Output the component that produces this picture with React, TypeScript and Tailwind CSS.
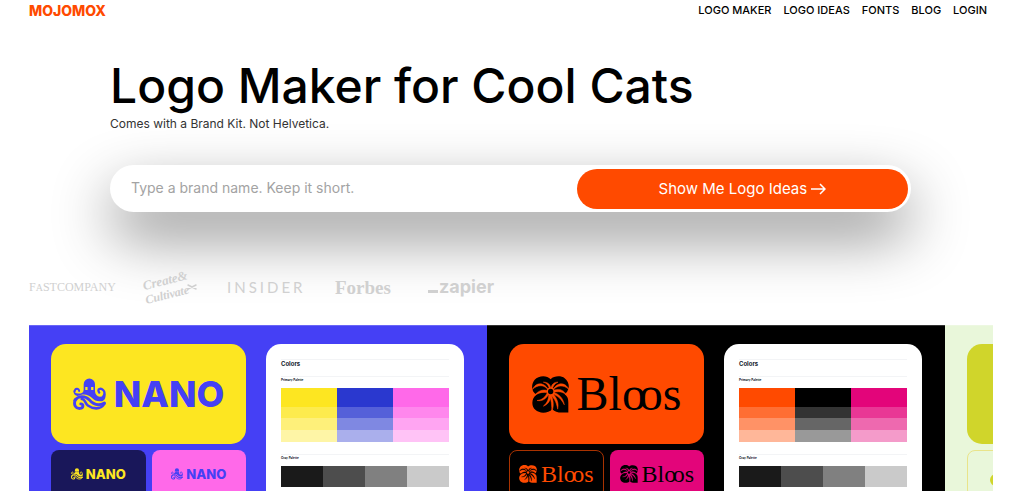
import React from "react";

const navLinks = ["LOGO MAKER", "LOGO IDEAS", "FONTS", "BLOG", "LOGIN"];

function Octopus({ className }: { className: string }) {
  return (
    <svg viewBox="0 0 102 100" className={className} fill="none" stroke="currentColor" strokeLinecap="round" aria-hidden="true">
      <path
        d="M33 18a17.500 17.500 0 0 1 35 0v22c1 10 6 16 15 17 10 0 17-5 18-12 1 16-4 26-15 26-12 1-20-3-28-11C48 50 32 46 14 55 5 53 0 45 2 36c2 8 8 12 16 11 9 0 15-4 15-12zM38 27v9h7v-9zM56 27v9h7v-9z"
        fill="currentColor"
        fillRule="evenodd"
        stroke="none"
      />
      <path d="M19 39C18 29 6 30 5 41" strokeWidth="6" />
      <path d="M81 44C73 33 86 29 93 36C98 41 98 50 93 57" strokeWidth="7" />
      <path d="M6 68C16 53 38 53 50 66C60 78 76 88 97 76" strokeWidth="9" />
      <path d="M7 66C1 82 8 94 22 93C33 92 33 79 24 79" strokeWidth="9" />
      <path d="M27 64C39 64 36 78 46 84C60 94 84 99 97 79" strokeWidth="8" />
    </svg>
  );
}

function Flower({ className, cut }: { className: string; cut: string }) {
  return (
    <svg viewBox="0 0 111 110" className={className} aria-hidden="true">
      <path
        fill="currentColor"
        d="M56 9C66-2 88-2 98 6c12 9 16 26 9 37-2 5-5 8-9 11 12 8 11 20 11 32v23H90c-14 0-22-3-29-10-12 13-39 14-51 2-13-12-12-34 4-46C-2 48-4 26 8 11 19-2 44-4 56 9z"
      />
      <g fill={cut} stroke={cut} strokeWidth="1.500">
        <path d="M50 43C38 25 18 24 1 40 14 14 40 20 50 43z" />
        <path d="M53 42C51 28 45 21 34 18 48 17 57 26 57 42z" />
        <path d="M56 42C57 26 65 17 78 18 68 22 62 29 61 42z" />
        <path d="M62 43C72 20 98 14 111 40 94 24 74 27 62 43z" />
        <path d="M62 44C79 35 96 41 103 56 91 46 79 45 62 49z" />
        <path d="M62 48C83 53 94 68 97 86 88 69 78 59 60 53z" />
        <path d="M60 50C76 66 81 82 77 99 74 81 69 69 55 55z" />
        <path d="M55 50C66 73 66 91 59 108 60 88 58 72 52 54z" />
        <path d="M57 51C57 73 48 85 34 90 46 80 51 69 50 50z" />
        <path d="M52 49C44 69 31 76 15 73 31 71 39 64 46 49z" />
        <path d="M50 44C34 38 18 43 8 58 21 49 33 47 50 50z" />
      </g>
      <circle cx="56" cy="46" r="12" fill={cut} />
      <circle cx="56" cy="46" r="8" fill="currentColor" />
    </svg>
  );
}

function NanoLogo({ small = false }: { small?: boolean }) {
  return (
    <div className={small ? "flex items-center gap-[3px]" : "flex items-center gap-2"}>
      <Octopus className={small ? "size-3" : "size-[33px]"} />
      <span className={small ? "text-[13px] leading-none font-extrabold" : "text-[36px] leading-none font-extrabold"}>NANO</span>
    </div>
  );
}

function BloosLogo({ small = false, cut }: { small?: boolean; cut: string }) {
  return (
    <div className={small ? "flex items-center gap-1" : "flex items-center gap-2"}>
      <Flower className={small ? "size-[18px]" : "size-[37px]"} cut={cut} />
      <span
        className={
          small
            ? "font-['Liberation_Serif',serif] text-[24px] leading-none"
            : "font-['Liberation_Serif',serif] text-[48px] leading-none"
        }
      >
        Blo<span className="-ml-[0.15em]">o</span>s
      </span>
    </div>
  );
}

function Palette({ colors }: { colors: string[] }) {
  return (
    <div className="rounded-t-[15px] bg-white px-[15px] pt-[15px]">
      <h3 className="h-[17px] border-t border-gray-100 text-[6px] leading-[8px] font-bold text-gray-900">Colors</h3>
      <h4 className="h-3 border-t border-gray-100 pt-px text-[3px] leading-[4px] font-bold text-gray-900">Primary Palette</h4>
      <div className="grid grid-cols-3">
        {colors.map((color) => (
          <div key={color}>
            <div className="h-[19px]" style={{ backgroundColor: color }} />
            <div className="h-[11px] opacity-80" style={{ backgroundColor: color }} />
            <div className="h-3 opacity-60" style={{ backgroundColor: color }} />
            <div className="h-3 opacity-40" style={{ backgroundColor: color }} />
          </div>
        ))}
      </div>
      <h4 className="mt-3 h-3 border-t border-gray-100 pt-px text-[3px] leading-[4px] font-bold text-gray-900">Gray Palette</h4>
      <div className="grid h-[21px] grid-cols-4">
        <div className="bg-[#1a1a1a]" />
        <div className="bg-[#4d4d4d]" />
        <div className="bg-[#808080]" />
        <div className="bg-[#cacaca]" />
      </div>
    </div>
  );
}

type TileProps = {
  tone: string;
  main?: React.ReactNode;
  mainTone: string;
  left: React.ReactNode;
  leftTone: string;
  right?: React.ReactNode;
  rightTone: string;
  colors?: string[];
};

function BrandTile({ tone, main, mainTone, left, leftTone, right, rightTone, colors }: TileProps) {
  return (
    <li className={`grid w-[458px] shrink-0 grid-cols-[195px_198px] gap-5 border-t border-white/20 pt-[18px] pl-[22px] ${tone}`}>
      <div className="flex flex-col gap-1.5">
        <div className={`flex h-[100px] items-center justify-center rounded-[15px] ${mainTone}`}>{main}</div>
        <div className="grid grid-cols-2 gap-1.5">
          <div className={`flex h-[48px] items-center justify-center rounded-lg ${leftTone}`}>{left}</div>
          <div className={`flex h-[48px] items-center justify-center rounded-lg ${rightTone}`}>{right}</div>
        </div>
      </div>
      {colors && <Palette colors={colors} />}
    </li>
  );
}

function PressLogos() {
  return (
    <div className="flex h-9 items-center text-[#d0d0d0]">
      <span className="w-[112px] font-['Liberation_Serif',serif] text-[12px] leading-none whitespace-nowrap">
        F<span className="text-[10px]">A</span>STCOMPANY
      </span>
      <div className="w-[86px]">
        <svg viewBox="0 0 56 36" className="h-9 w-14" fill="currentColor" role="img" aria-label="Create & Cultivate">
          <g transform="rotate(-14 28 18)" fontFamily="Liberation Serif, serif" fontStyle="italic" fontWeight="700">
            <text x="3" y="15" fontSize="13">Create&amp;</text>
            <text x="2" y="29" fontSize="12">Cultivate</text>
          </g>
          <path d="M47 20l8-4M47 16l8 4" stroke="currentColor" strokeWidth="1.500" strokeLinecap="round" />
        </svg>
      </div>
      <span className="w-[108px] font-[Lato,sans-serif] text-[15px] leading-none tracking-[0.2em]">INSIDER</span>
      <span className="w-[93px] font-['Liberation_Serif',serif] text-[19px] leading-none font-bold">Forbes</span>
      <span className="flex items-end gap-px text-[18px] leading-5 font-bold">
        <span className="mb-1 h-[3px] w-2.5 bg-current" />
        zapier
      </span>
    </div>
  );
}

export default function App() {
  return (
    <div className="flex h-screen flex-col overflow-hidden bg-white font-[Inter,sans-serif] text-black">
      <header className="flex h-[21px] shrink-0 items-center justify-between pr-[37px] pl-[29px]">
        <a href="#" className="text-[14px] leading-none font-extrabold text-[#ff4a00]">MOJOMOX</a>
        <nav className="flex gap-3 text-[11px] leading-none font-medium">
          {navLinks.map((label) => (
            <a key={label} href="#">{label}</a>
          ))}
        </nav>
      </header>

      <main className="flex min-h-0 grow flex-col">
        <section className="pt-[37px] pr-[113px] pl-[110px]">
          <h1 className="text-[48px] leading-[56px] font-medium">Logo Maker for Cool Cats</h1>
          <p className="mt-0.5 text-[12px] leading-4 text-[#333]">Comes with a Brand Kit. Not Helvetica.</p>
          <form
            className="mt-[33px] flex h-[47px] rounded-full bg-white p-[3px] pt-1 shadow-[0_25px_60px_rgba(0,0,0,0.45)]"
            onSubmit={(event) => event.preventDefault()}
          >
            <input
              type="text"
              aria-label="Brand name"
              placeholder="Type a brand name. Keep it short."
              className="min-w-0 flex-1 bg-transparent pb-1 pl-[18px] text-[14px] outline-none placeholder:text-[#a3a3a3]"
            />
            <button type="submit" className="flex w-5/12 items-center justify-center gap-1 rounded-full bg-[#ff4a00] text-[15px] text-white">
              Show Me Logo Ideas
              <svg viewBox="0 0 15 12" className="h-3 w-[15px]" fill="none" stroke="currentColor" strokeWidth="1.500" aria-hidden="true">
                <path d="M0 6h14M9 1l5 5-5 5" />
              </svg>
            </button>
          </form>
        </section>

        <section className="relative mt-[57px] pl-[29px]">
          <PressLogos />
        </section>

        <section className="mt-5 mr-[31px] ml-[29px] min-h-0 grow overflow-hidden">
          <ul className="flex h-full">
            <BrandTile
              tone="bg-[#4540f5]"
              main={<NanoLogo />}
              mainTone="bg-[#fde621] text-[#4540f5]"
              left={<NanoLogo small />}
              leftTone="bg-[#19175a] text-[#fde621]"
              right={<NanoLogo small />}
              rightTone="bg-[#ff69e9] text-[#4540f5]"
              colors={["#fde621", "#2a38cf", "#ff69e9"]}
            />
            <BrandTile
              tone="bg-black"
              main={<BloosLogo cut="#ff4a00" />}
              mainTone="bg-[#ff4a00] text-black"
              left={<BloosLogo small cut="#000000" />}
              leftTone="border border-[#a83200] text-[#ff4a00]"
              right={<BloosLogo small cut="#e3057a" />}
              rightTone="bg-[#e3057a] text-black"
              colors={["#ff4a00", "#000000", "#e3057a"]}
            />
            <BrandTile
              tone="bg-[#e9f7da]"
              mainTone="bg-[#d0d52b]"
              left={
                <svg viewBox="0 0 52 12" className="mt-3 h-3 w-[52px]" fill="none" stroke="#d0d52b" strokeWidth="4" aria-hidden="true">
                  <circle cx="8" cy="6" r="4" />
                  <circle cx="22" cy="6" r="4" />
                  <circle cx="36" cy="6" r="4" />
                </svg>
              }
              leftTone="border border-[#e9e48a]"
              rightTone="bg-[#d0d52b]"
            />
          </ul>
        </section>
      </main>
    </div>
  );
}
